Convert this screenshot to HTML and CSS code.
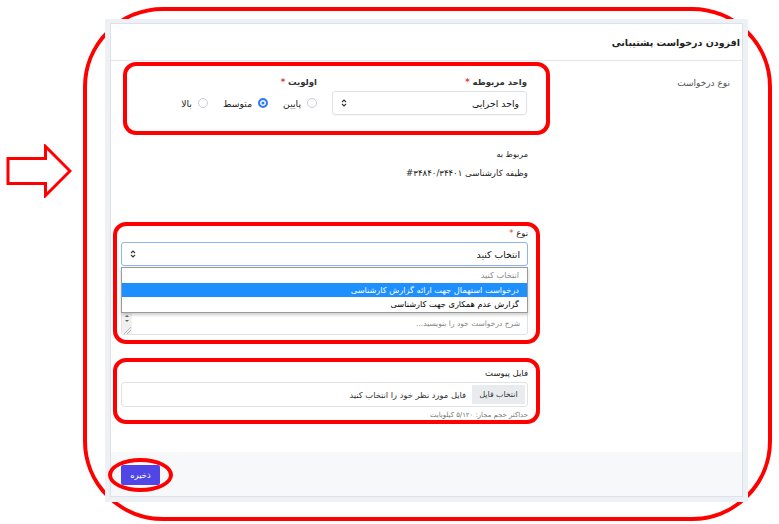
FILE: index.html
```html
<!DOCTYPE html>
<html lang="fa">

<head>
    <meta charset="UTF-8">
    <meta name="viewport" content="width=device-width, initial-scale=1.0">
    <title>افزودن درخواست پشتیبانی</title>
    <link rel="stylesheet" href="styles.css">
</head>

<body>
    <svg class="pointer" width="66" height="54" viewBox="0 0 66 54">
        <polygon points="2,14.5 39.5,14.5 39.5,2.5 64,27 39.5,51.5 39.5,39.5 2,39.5" fill="#fff" stroke="#ff0000" stroke-width="3" />
    </svg>

    <div class="frame">
        <div class="shot">
            <div class="card" dir="rtl">
                <div class="card-head">افزودن درخواست پشتیبانی</div>

                <div class="card-body">
                    <div class="side">نوع درخواست</div>

                    <div class="form">
                        <div class="mark mark-top">
                            <div class="row">
                                <div class="unit">
                                    <label class="lbl">واحد مربوطه <span class="req">*</span></label>
                                    <div class="select">
                                        <span>واحد اجرایی</span>
                                        <svg class="arrows" width="6" height="10" viewBox="0 0 6 10">
                                            <path d="M1 4 3 2 5 4M1 6 3 8 5 6" fill="none" stroke="#333" stroke-width="1.1" />
                                        </svg>
                                    </div>
                                </div>
                                <div class="priority">
                                    <label class="lbl">اولویت <span class="req">*</span></label>
                                    <div class="radios">
                                        <span class="radio"><i class="dot"></i>پایین</span>
                                        <span class="radio"><i class="dot on"></i>متوسط</span>
                                        <span class="radio"><i class="dot"></i>بالا</span>
                                    </div>
                                </div>
                            </div>
                        </div>

                        <div class="related">
                            <div class="rel-label">مربوط به</div>
                            <div class="rel-value">وظیفه کارشناسی ۳۴۸۴۰/۳۴۴۰۱#</div>
                        </div>

                        <div class="mark mark-type">
                            <label class="lbl small">نوع <span class="req">*</span></label>
                            <div class="select focus">
                                <span>انتخاب کنید</span>
                                <svg class="arrows" width="6" height="10" viewBox="0 0 6 10">
                                    <path d="M1 4 3 2 5 4M1 6 3 8 5 6" fill="none" stroke="#333" stroke-width="1.1" />
                                </svg>
                            </div>
                            <div class="desc">
                                <span class="placeholder">شرح درخواست خود را بنویسید...</span>
                                <span class="scroll">
                                    <svg width="10" height="22" viewBox="0 0 10 22">
                                        <path d="M3 4 5 2 7 4Z M3 7 5 9 7 7Z" fill="#666" />
                                        <path d="M2 21 9 14M5 21 9 17" stroke="#aaa" stroke-width="0.8" />
                                    </svg>
                                </span>
                            </div>
                            <ul class="options">
                                <li class="muted">انتخاب کنید</li>
                                <li class="picked">درخواست استهمال جهت ارائه گزارش کارشناسی</li>
                                <li>گزارش عدم همکاری جهت کارشناسی</li>
                            </ul>
                        </div>

                        <div class="mark mark-file">
                            <label class="lbl small">فایل پیوست</label>
                            <div class="file">
                                <span class="file-btn">انتخاب فایل</span>
                                <span class="file-text">فایل مورد نظر خود را انتخاب کنید</span>
                            </div>
                            <div class="hint">حداکثر حجم مجاز: ۵/۱۲۰ کیلوبایت</div>
                        </div>
                    </div>
                </div>

                <div class="card-foot">
                    <span class="ring"><button class="save">ذخیره</button></span>
                </div>
            </div>
        </div>
    </div>
</body>

</html>
```

FILE: styles.css
```css
* {
    box-sizing: border-box;
}

body {
    margin: 0;
    width: 779px;
    height: 524px;
    overflow: hidden;
    display: flex;
    align-items: flex-start;
    background: #fff;
    font-family: "DejaVu Sans", sans-serif;
}

.pointer {
    flex: none;
    margin: 144px 0 0 6px;
}

.frame {
    flex: none;
    width: 689px;
    height: 514px;
    margin: 7px 0 0 11px;
    padding: 8px 0 0 18px;
    border: 4px solid #ff0000;
    border-radius: 80px;
}

.shot {
    width: 643px;
    height: 483px;
    padding: 4px 5px 5px 5px;
    background: #edf0f5;
    display: flex;
}

.card {
    flex: 1;
    display: flex;
    flex-direction: column;
    background: #fff;
    border: 1px solid #dde2ea;
}

.card-head {
    height: 37px;
    padding-right: 2px;
    border-bottom: 1px solid #e4e8ee;
    display: flex;
    align-items: center;
    font-size: 9.5px;
    font-weight: bold;
    color: #222;
}

.card-body {
    flex: 1;
    display: flex;
}

.side {
    width: 192px;
    padding: 15px 12px 0 0;
    font-size: 9px;
    line-height: 14px;
    color: #555;
}

.form {
    width: 437px;
}

.mark {
    border: 4px solid #ff0000;
    border-radius: 13px;
}

.mark-top {
    margin: 1px 0 0 10px;
    padding: 9px 19px 16px 0;
}

.row {
    display: flex;
    gap: 15px;
}

.unit {
    width: 195px;
}

.lbl {
    display: block;
    margin-bottom: 2px;
    font-size: 8.5px;
    font-weight: bold;
    line-height: 14px;
    color: #333;
}

.lbl.small {
    font-weight: normal;
    line-height: 12px;
    margin-bottom: 3px;
    color: #222;
}

.req {
    color: #e53935;
}

.select {
    height: 24px;
    padding: 0 7px 0 8px;
    display: flex;
    align-items: center;
    justify-content: space-between;
    border: 1px solid #dfe3e9;
    border-radius: 3px;
    box-shadow: 0 1px 1px rgba(0, 0, 0, 0.04);
    font-size: 9.3px;
    color: #111;
}

.select.focus {
    border-color: #8db3f2;
}

.radios {
    height: 24px;
    display: flex;
    align-items: center;
    gap: 15px;
}

.radio {
    display: flex;
    align-items: center;
    gap: 6px;
    font-size: 9.3px;
    color: #222;
}

.dot {
    width: 10px;
    height: 10px;
    border: 1px solid #c8ccd2;
    border-radius: 50%;
}

.dot.on {
    border: 2px solid #2f7cf6;
    background: #2f7cf6;
    box-shadow: inset 0 0 0 1.5px #fff;
}

.related {
    margin-top: 14px;
    padding-right: 22px;
    color: #222;
}

.rel-label {
    font-size: 8px;
    line-height: 12px;
}

.rel-value {
    margin-top: 5px;
    font-size: 8.6px;
    line-height: 14px;
}

.mark-type {
    position: relative;
    margin: 42px 10px 0 0;
    padding: 1px 8px 5px 4px;
}

.desc {
    height: 23px;
    margin-top: 46px;
    display: flex;
    align-items: center;
    justify-content: space-between;
    border: 1px solid #dfe3e9;
    border-radius: 3px;
    overflow: hidden;
}

.placeholder {
    padding-right: 7px;
    font-size: 7.5px;
    color: #888;
}

.scroll {
    width: 10px;
    height: 100%;
    background: #f0f0f0;
}

.scroll svg {
    display: block;
}

.options {
    position: absolute;
    top: 41px;
    left: 4px;
    right: 8px;
    margin: 0;
    padding: 0;
    list-style: none;
    background: #fff;
    border: 1px solid #9a9a9a;
    box-shadow: 0 2px 3px rgba(0, 0, 0, 0.2);
}

.options li {
    height: 14.5px;
    padding-right: 8px;
    font-size: 8.2px;
    line-height: 14.5px;
    color: #000;
}

.options .muted {
    color: #8a8a8a;
}

.options .picked {
    background: #1e8fff;
    color: #fff;
}

.mark-file {
    margin: 14px 10px 0 0;
    padding: 5px 8px 0 4px;
}

.file {
    height: 25px;
    padding: 2px;
    display: flex;
    align-items: center;
    gap: 6px;
    border: 1px solid #dfe3e9;
    border-radius: 3px;
}

.file-btn {
    width: 53px;
    height: 100%;
    display: flex;
    align-items: center;
    justify-content: center;
    background: #e9ecef;
    font-size: 7.8px;
    color: #333;
}

.file-text {
    font-size: 8.3px;
    color: #333;
}

.hint {
    margin-top: 3px;
    font-size: 6.9px;
    line-height: 10px;
    color: #777;
}

.card-foot {
    height: 44px;
    padding-top: 6px;
    direction: ltr;
    background: #f7f8fa;
}

.ring {
    display: inline-block;
    margin-left: -3px;
    padding: 3px 9px;
    border: 4px solid #ff0000;
    border-radius: 50%;
}

.save {
    display: block;
    width: 39px;
    height: 20px;
    padding: 0;
    border: none;
    border-radius: 2px;
    background: #4f46e5;
    color: #fff;
    font-family: inherit;
    font-size: 8.5px;
}
```
